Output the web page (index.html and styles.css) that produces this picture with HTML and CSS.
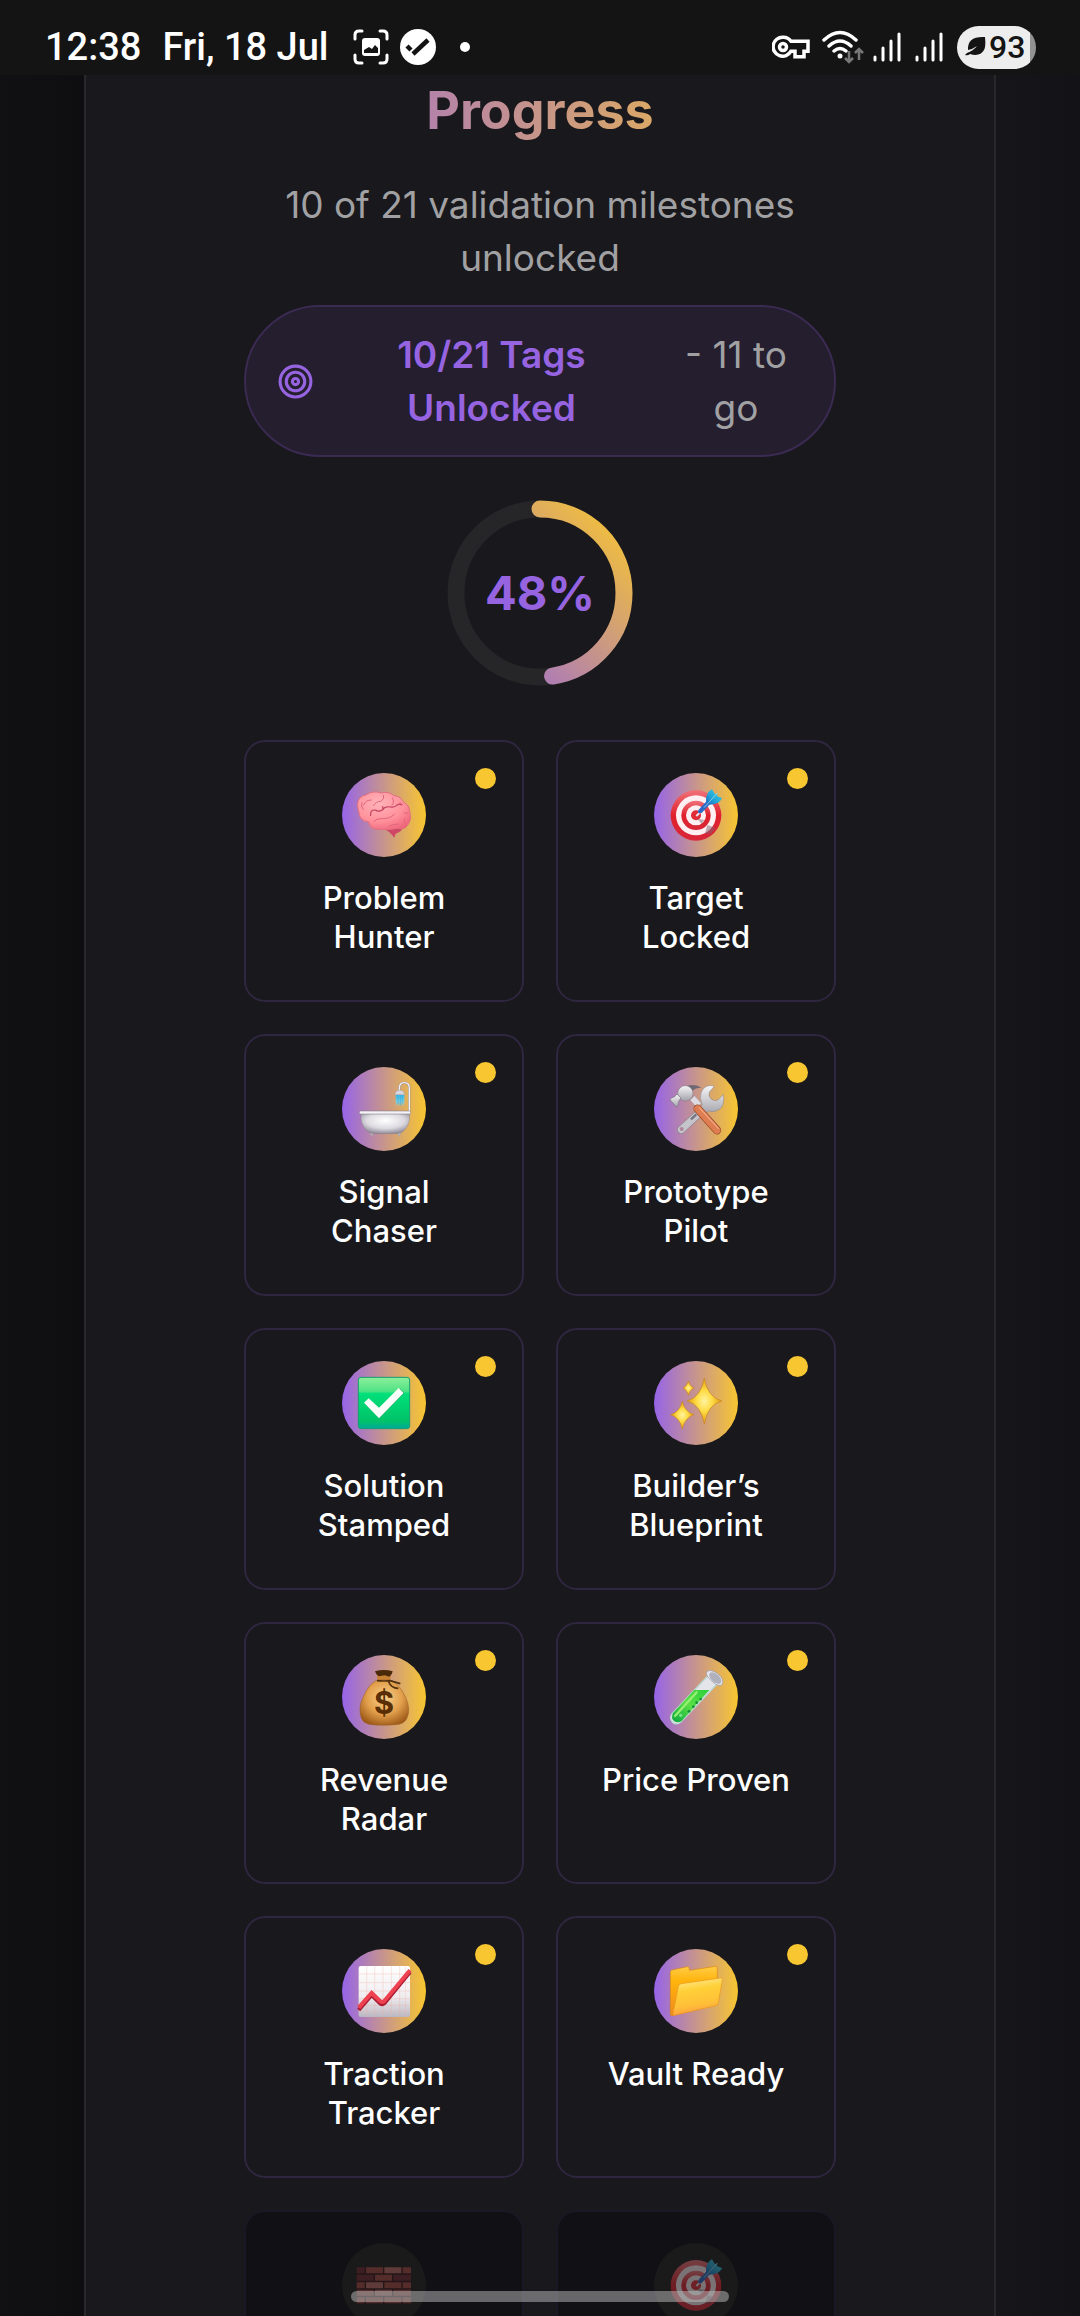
FILE: index.html
```html
<!DOCTYPE html>
<html lang="en">
<head>
<meta charset="utf-8">
<meta name="viewport" content="width=device-width, initial-scale=1">
<title>Progress</title>
<link rel="stylesheet" href="styles.css">
</head>
<body>
<svg class="defs" aria-hidden="true">
  <defs>
    <linearGradient id="brand" x1="0" y1="0" x2="1" y2="1"><stop offset="0" stop-color="#9664e0"/><stop offset="1" stop-color="#f8c630"/></linearGradient>
    <radialGradient id="pink" cx=".4" cy=".3" r=".8"><stop offset="0" stop-color="#ffb3b8"/><stop offset=".6" stop-color="#ff919c"/><stop offset="1" stop-color="#ee6379"/></radialGradient>
    <linearGradient id="red" x1="0" y1="0" x2="0" y2="1"><stop offset="0" stop-color="#f0737a"/><stop offset=".5" stop-color="#e0202c"/><stop offset="1" stop-color="#d8283a"/></linearGradient>
    <linearGradient id="dart" x1="1" y1="0" x2="0" y2="1"><stop offset="0" stop-color="#3fd8e8"/><stop offset=".6" stop-color="#22a4d6"/><stop offset="1" stop-color="#1c5fc0"/></linearGradient>
    <radialGradient id="tub" cx=".5" cy=".35" r=".65"><stop offset="0" stop-color="#fff"/><stop offset=".6" stop-color="#dcdae0"/><stop offset="1" stop-color="#928d9c"/></radialGradient>
    <linearGradient id="steel" x1="0" y1="0" x2="0" y2="1"><stop offset="0" stop-color="#f6f6f8"/><stop offset="1" stop-color="#a3a2ab"/></linearGradient>
    <linearGradient id="green" x1="0" y1="0" x2="0" y2="1"><stop offset="0" stop-color="#8cf09a"/><stop offset=".27" stop-color="#50e285"/><stop offset=".32" stop-color="#00e07a"/><stop offset=".85" stop-color="#00c268"/><stop offset="1" stop-color="#00a99b"/></linearGradient>
    <radialGradient id="spark"><stop offset="0" stop-color="#fff3a0"/><stop offset=".45" stop-color="#ffdc45"/><stop offset="1" stop-color="#e09a10"/></radialGradient>
    <radialGradient id="bag" cx=".5" cy=".4" r=".65"><stop offset="0" stop-color="#f7d08c"/><stop offset=".55" stop-color="#e3a04c"/><stop offset="1" stop-color="#9b5716"/></radialGradient>
    <linearGradient id="liquid" x1="1" y1="0" x2="0" y2="1"><stop offset="0" stop-color="#2bd03c"/><stop offset=".5" stop-color="#5adf45"/><stop offset="1" stop-color="#08a640"/></linearGradient>
    <linearGradient id="paper" x1="0" y1="0" x2="0" y2="1"><stop offset="0" stop-color="#fff"/><stop offset=".6" stop-color="#f0edf0"/><stop offset="1" stop-color="#bab7c2"/></linearGradient>
    <linearGradient id="folderBack" x1="0" y1="0" x2="0" y2="1"><stop offset="0" stop-color="#ffcc45"/><stop offset=".3" stop-color="#ffb40c"/><stop offset="1" stop-color="#f08a1c"/></linearGradient>
    <linearGradient id="folderFront" x1=".4" y1="0" x2=".6" y2="1"><stop offset="0" stop-color="#ffe98c"/><stop offset=".3" stop-color="#ffd038"/><stop offset=".7" stop-color="#ffbf38"/><stop offset="1" stop-color="#ff9340"/></linearGradient>
    <linearGradient id="water" x1="0" y1="0" x2="0" y2="1"><stop offset="0" stop-color="#37b8ea"/><stop offset=".6" stop-color="#7fd0dc"/><stop offset="1" stop-color="#7fd0dc" stop-opacity="0"/></linearGradient>
    <symbol id="target" viewBox="0 0 252 252">
      <circle cx="126" cy="127" r="76" fill="url(#red)"/>
      <circle cx="126" cy="127" r="60" fill="#fdeff2"/>
      <circle cx="126" cy="127" r="44" fill="url(#red)"/>
      <circle cx="126" cy="127" r="30" fill="#fdeff2"/>
      <circle cx="126" cy="127" r="15" fill="#e02a36"/>
      <path d="M130 138l20 2-6 14zM160 156l24 8-12 18-19 0z" fill="#7d6070" opacity=".5"/>
      <path d="M127 129l9-9" stroke="#e9e2ee" stroke-width="6"/>
      <path d="M134 110l25-27 9 10-25 27-8 1-4-5z" fill="#2b6ac8"/>
      <path d="M157 88c-3-17 3-31 17-39l9 15 7-3-1 8 15 6c-6 14-20 20-38 20z" fill="url(#dart)"/>
      <path d="M150 104l40-44" stroke="#b8eef5" stroke-width="2"/>
    </symbol>
    <symbol id="bars" viewBox="0 0 28 30"><path d="M2 25v3M10 16v12M18 9v19M26 2v26" fill="none" stroke="#fff" stroke-width="3" stroke-linecap="round"/></symbol>
  </defs>
</svg>

<header class="status">
  <time class="clock">12:38</time>
  <span class="date">Fri, 18 Jul</span>
  <svg class="shot" viewBox="0 0 36 36" aria-hidden="true"><path d="M2 10V6q0-4 4-4h3M27 2h3q4 0 4 4v4M34 26v4q0 4-4 4h-3M9 34H6q-4 0-4-4v-4" fill="none" stroke="#fff" stroke-width="3" stroke-linecap="round"/><rect x="9" y="9" width="18" height="18" rx="3" fill="#fff"/><path d="M11 24v-3l5-3 3 2 3-4 3 3v5z" fill="#141414"/></svg>
  <svg class="done" viewBox="0 0 36 36" aria-hidden="true"><circle cx="18" cy="18" r="18" fill="#fff"/><path d="M13 25L28 11M7 17l4 4" fill="none" stroke="#141414" stroke-width="4.500"/></svg>
  <span class="more"></span>
  <span class="spacer"></span>
  <svg class="key" viewBox="0 0 38 24" aria-hidden="true"><path d="M11 2.500a9.500 9.500 0 1 0 8 14h4v5.500h9v-5.500h4V6.500H19a9.500 9.500 0 0 0-8-4z" fill="none" stroke="#fff" stroke-width="3.500" transform="translate(0 -.3)"/><circle cx="11" cy="12" r="3.500" fill="none" stroke="#fff" stroke-width="3.500"/></svg>
  <svg class="wifi" viewBox="0 0 42 34" aria-hidden="true"><g fill="none" stroke="#fff" stroke-width="3.500" stroke-linecap="round"><path d="M2 10q16-15 32 0M7 16q11-10 22 0M12 21q6-5 12 0"/></g><circle cx="18" cy="26" r="2.500" fill="#fff"/><path d="M27 21v11M23 28l4 4 4-4M37 30V19M33 23l4-4 4 4" fill="none" stroke="#777" stroke-width="2.500"/></svg>
  <svg class="signal" aria-hidden="true"><use href="#bars"/></svg>
  <svg class="signal" aria-hidden="true"><use href="#bars"/></svg>
  <span class="battery"><svg viewBox="0 0 24 24" aria-hidden="true"><path d="M2 20q3 1 5-1 10 3 14-4 2-3 1-13Q4 1 5 15q5-1 9-4-4 5-10 7z" fill="#141414"/></svg>93</span>
</header>

<div class="page">
  <main class="panel">
    <div class="content">
      <h1>Progress</h1>
      <p class="summary">10 of 21 validation milestones unlocked</p>
      <div class="pill">
        <svg viewBox="0 0 24 24" aria-hidden="true"><g fill="none" stroke="#9664e0" stroke-width="2"><circle cx="12" cy="12" r="10"/><circle cx="12" cy="12" r="6"/><circle cx="12" cy="12" r="2"/></g></svg>
        <strong>10/21 Tags Unlocked</strong>
        <span>- 11 to go</span>
      </div>
      <div class="ring">
        <svg viewBox="0 0 186 186" aria-hidden="true"><g transform="rotate(-90 93 93)" fill="none" stroke-width="17"><circle cx="93" cy="93" r="84" stroke="#262628"/><circle cx="93" cy="93" r="84" stroke="url(#brand)" stroke-linecap="round" pathLength="100" stroke-dasharray="47.600 100"/></g></svg>
        <span>48%</span>
      </div>
      <ul class="tags">
        <li class="tag"><span class="badge"><svg viewBox="0 0 252 252">
          <path d="M122 164q18 9 50-6l14 1q-7 18-25 23l-5 13q-5-14-34-31z" fill="#cf4766"/>
          <path d="M50 114C42 92 48 70 71 66q24-15 46-6 23-6 39 8 21 2 28 19 19 9 19 29 7 24-6 40-10 16-29 10-23 5-50 3-34 3-39-23-27 0-29-32z" fill="url(#pink)" stroke="#e26f80" stroke-width="3"/>
          <path d="M86 127q-2-17 14-16 10 7 22-1 7-11 23-8 14 2 20-6 8-5 14 0M123 110l-1-9" fill="none" stroke="#c23f5e" stroke-width="3.500" stroke-linecap="round"/>
          <path d="M65 96q6-16 23-15M95 97q7-12 22-12 11-8 8-18M151 74q8 15-1 22M174 88l8 8M96 145q8-9 22-8 24 2 39-13M140 161q12-8 28-8M186 119q8 6 12 0M187 137q-4 9 3 15M60 89q-4 16 5 21" fill="none" stroke="#e0667c" stroke-width="3" stroke-linecap="round"/>
        </svg></span><span class="name">Problem Hunter</span></li>
        <li class="tag"><span class="badge"><svg viewBox="0 0 252 252"><use href="#target"/></svg></span><span class="name">Target Locked</span></li>
        <li class="tag"><span class="badge"><svg viewBox="0 0 252 252">
          <path d="M172 75V64q0-17 15-17t15 17v72" fill="none" stroke="#8e8997" stroke-width="6"/><path d="M172 75V64q0-17 15-17t15 17v72" fill="none" stroke="#f4f2f6" stroke-width="4"/>
          <path d="M161 83h26v36h-26z" fill="url(#water)"/><path d="M168 86v25M175 86v29M181 86v24" stroke="#2597dc" stroke-width="2" opacity=".7"/><path d="M159 83v-4q3-9 14-10 12 1 14 10v4z" fill="#d8d5dd" stroke="#8b8792" stroke-width="1"/>
          <path d="M86 198l3 10 4-9M167 198l5 10 3-10" fill="#ccc" stroke="#aaa5b0" stroke-width="3"/>
          <path d="M57 140h146q2 31-15 48-8 12-30 12h-56q-22 0-30-12-17-17-15-48z" fill="url(#tub)" stroke="#7b7680" stroke-width="1"/><rect x="52" y="132" width="154" height="9" rx="4" fill="#f5f3f7" stroke="#77727c" stroke-width="1.500"/>
        </svg></span><span class="name">Signal Chaser</span></li>
        <li class="tag"><span class="badge"><svg viewBox="0 0 252 252">
          <path d="M146 129l-64 59" stroke="#827f8a" stroke-width="24" stroke-linecap="round"/><path d="M146 129l-64 59" stroke="#c6c4cb" stroke-width="21" stroke-linecap="round"/><circle cx="83" cy="186" r="6" fill="#af859a"/><path d="M111 157l16-15" stroke="#777480" stroke-width="7"/>
          <path d="M181 57q-28-7-39 18-7 20 3 38l-11 12 17 17 12-10q18 6 34-5 16-12 11-45l-16 17q-12 5-21-3t-5-20z" fill="url(#steel)" stroke="#85828b" stroke-width="1.500"/>
          <path d="M108 99l14-13 20 23-13 13z" fill="#dddbe1" stroke="#85828b"/>
          <path d="M131 125l58 65" stroke="#91401f" stroke-width="25" stroke-linecap="round"/><path d="M131 125l58 65" stroke="#df7d52" stroke-width="21" stroke-linecap="round"/><path d="M136 122l57 62" stroke="#f0a983" stroke-width="4" stroke-linecap="round"/>
          <path d="M98 57q28-8 44 5-18 0-26 9z" fill="#6f6973"/><circle cx="94" cy="79" r="23" fill="url(#steel)" stroke="#7b7782" stroke-width="1.500"/>
          <path d="M48 98q4-8 14-9l7-8 12 12-6 8q-1 12-7 20z" fill="url(#steel)" stroke="#75717d" stroke-width="2"/>
        </svg></span><span class="name">Prototype Pilot</span></li>
        <li class="tag"><span class="badge"><svg viewBox="0 0 252 252">
          <rect x="49" y="49" width="154" height="154" rx="8" fill="url(#green)" stroke="#189d72" stroke-width="3"/><path d="M69 129l13-13 30 29 62-62 13 13-75 76z" fill="#078544" opacity=".7"/><path d="M66 125l14-13 31 28 59-59 15 15-74 76z" fill="#fafdfa"/>
        </svg></span><span class="name">Solution Stamped</span></li>
        <li class="tag"><span class="badge"><svg viewBox="0 0 252 252" fill="url(#spark)" stroke="#c9851c" stroke-width="2">
          <path d="M151 51q10 58 52 69-42 11-52 69-10-58-52-69 42-11 52-69z"/><path d="M85 121q8 33 35 40-27 8-35 43-8-35-35-43 27-7 35-40z"/><path d="M103 60q4 16 17 21-13 5-17 22-4-17-16-22 12-5 16-21z"/>
        </svg></span><span class="name">Builder’s Blueprint</span></li>
        <li class="tag"><span class="badge"><svg viewBox="0 0 252 252">
          <path d="M104 50h44l-4 30h-37z" fill="#c98134"/><path d="M99 49q27-8 53 0-1 10-10 16l-14-4-18 3q-9-6-11-15z" fill="#4b2a0a"/><path d="M102 77q26-7 47 0 24 12 42 50 17 38 3 64-8 17-35 18-40 3-69 0-25-2-32-20-11-32 6-64 17-38 38-48z" fill="url(#bag)" stroke="#9a5d20" stroke-width="1.500"/><path d="M105 77q22 2 39 0l31 9M139 78q8 22 30 22" fill="none" stroke="#51300f" stroke-width="5"/><text x="126" y="178" text-anchor="middle" class="dollar">$</text>
        </svg></span><span class="name">Revenue Radar</span></li>
        <li class="tag"><span class="badge"><svg viewBox="0 0 252 252">
          <path d="M178 72L68 188" stroke="#b7d6cf" stroke-width="41" stroke-linecap="round"/><path d="M178 72L68 188" stroke="#e4e5ea" stroke-width="33" stroke-linecap="round"/><path d="M121 105h45l-83 93q-12 8-23 0-10-9-3-24z" fill="url(#liquid)"/><path d="M128 112l-65 71" stroke="#97ef73" stroke-width="7" stroke-linecap="round"/><g fill="#168d35"><circle cx="140" cy="132" r="4"/><circle cx="128" cy="143" r="4"/><circle cx="118" cy="155" r="4"/><circle cx="105" cy="169" r="4"/></g><circle cx="80" cy="181" r="5" fill="#76e589"/><path d="M158 50q12-9 34 7 21 17 12 32-10 8-30-10-21-18-16-29z" fill="#e6e6ec" stroke="#9495a5" stroke-width="2"/><ellipse cx="184" cy="69" rx="22" ry="12" transform="rotate(42 184 69)" fill="#b0b1bd"/>
        </svg></span><span class="name">Price Proven</span></li>
        <li class="tag"><span class="badge"><svg viewBox="0 0 252 252">
          <rect x="50" y="51" width="154" height="153" rx="6" fill="url(#paper)"/><path d="M74 51v152M98 51v152M123 51v152M148 51v152M173 51v152M190 51v152M50 75h154M50 101h154M50 126h154M50 149h154M50 169h154M50 187h154" stroke="#efa99b" stroke-width="1.500" opacity=".6"/><path d="M50 183l39-45 25 25q7 5 13 0l77-94" fill="none" stroke="#a91c33" stroke-width="12"/><path d="M50 176l39-44 25 24q7 6 13 0l77-92" fill="none" stroke="#ef4250" stroke-width="12"/>
        </svg></span><span class="name">Traction Tracker</span></li>
        <li class="tag"><span class="badge"><svg viewBox="0 0 252 252">
          <path d="M49 69q0-5 5-6l46-10q5-1 5 4l2 7 77-12q6-1 6 5v109L56 200q-7 1-7-6z" fill="url(#folderBack)" stroke="#d98518" stroke-width="2"/><path d="M82 104l117-17q7-1 6 5l-12 70q-1 6-8 8L61 199q-5 1-4-5l16-82q2-7 9-8z" fill="url(#folderFront)" stroke="#ec961d" stroke-width="2"/>
        </svg></span><span class="name">Vault Ready</span></li>
        <li class="tag locked"><span class="badge"><svg viewBox="0 0 252 252">
          <path d="M44 73h163v108H44z" fill="#311014"/><path d="M44 73h24v18H44zM44 95h51v18H44zM154 95h53v18h-53z" fill="#6e262e"/><path d="M127 73h51v18h-51zM72 118h51v18H72zM99 140h51v18H99z" fill="#bd6a60"/><path d="M72 73h51v18H72zM182 73h25v18h-25zM99 95h51v18H99zM44 118h24v18H44zM127 118h51v18h-51zM182 118h25v18h-25zM44 140h51v18H44zM154 140h53v18h-53zM44 163h24v18H44zM72 163h51v18H72zM127 163h51v18h-51zM182 163h25v18h-25z" fill="#a5463f"/>
        </svg></span></li>
        <li class="tag locked"><span class="badge"><svg viewBox="0 0 252 252"><use href="#target"/></svg></span></li>
      </ul>
    </div>
  </main>
</div>
<div class="home"></div>
</body>
</html>
```
FILE: styles.css
```css
* { box-sizing: border-box; }

body {
  margin: 0;
  height: 100vh;
  display: flex;
  flex-direction: column;
  overflow: hidden;
  background: #111114;
  color: #fff;
  font-family: Inter, "Liberation Sans", sans-serif;
}

svg { display: block; flex: none; }
.defs { position: absolute; width: 0; height: 0; }

.status {
  flex: none;
  height: 75px;
  padding: 19px 44px 0 45px;
  display: flex;
  align-items: center;
  background: #141414;
  font: 500 38px/48px Roboto, sans-serif;
  white-space: nowrap;
}
.date { margin-left: 21px; }
.shot { width: 36px; height: 36px; margin-left: 24px; }
.done { width: 36px; height: 36px; margin-left: 11px; }
.more { width: 10px; height: 10px; margin-left: 24px; border-radius: 50%; background: #fff; }
.spacer { flex: 1; }
.key { width: 38px; height: 24px; margin-right: 12px; }
.wifi { width: 42px; height: 34px; margin-right: 9px; }
.signal { width: 28px; height: 30px; margin-right: 14px; }
.battery {
  width: 79px;
  height: 43px;
  padding-left: 6px;
  display: flex;
  align-items: center;
  gap: 2px;
  border-radius: 22px;
  background: linear-gradient(90deg, #ededed 73px, #929292 73px);
  color: #141414;
  font-size: 32px;
}
.battery svg { width: 24px; height: 24px; }

.page {
  flex: 1;
  min-height: 0;
  overflow: hidden;
  padding: 0 84px;
  background: linear-gradient(90deg, #111113, #0e0e11 8%, #16151a 92%, #131317);
}
.panel {
  min-height: 100%;
  padding: 4px 158px 0;
  border: solid #28282a;
  border-width: 0 2px;
  background: #19181c;
}
.content { text-align: center; }

h1 {
  margin: 0;
  font-size: 52px;
  line-height: 64px;
  font-weight: 700;
  color: transparent;
  background: linear-gradient(90deg, #9664e0, #f8c630);
  background-clip: text;
  -webkit-background-clip: text;
}
.summary {
  margin: 35px 0 21px;
  font-size: 37px;
  line-height: 53px;
  color: #a1a1a3;
}
.pill {
  display: grid;
  grid-template-columns: 37px 7fr 3fr;
  align-items: center;
  gap: 21px;
  padding: 21px 31px;
  border: 2px solid #3b2a52;
  border-radius: 76px;
  background: #241e2f;
  font-size: 37px;
  line-height: 53px;
  color: #a1a1a3;
}
.pill svg { width: 37px; height: 37px; }
.pill strong { font-weight: 600; color: #9664e0; }

.ring {
  display: grid;
  place-items: center;
  margin: 43px 0 54px;
}
.ring > * { grid-area: 1 / 1; }
.ring svg { width: 186px; height: 186px; }
.ring span { font-size: 47px; line-height: 56px; font-weight: 700; color: #9664e0; }

.tags {
  display: grid;
  grid-template-columns: 1fr 1fr;
  gap: 32px;
  margin: 0;
  padding: 0;
  list-style: none;
}
.tag {
  position: relative;
  display: flex;
  flex-direction: column;
  align-items: center;
  gap: 21px;
  min-height: 262px;
  padding: 31px 40px;
  border: 2px solid #2f2640;
  border-radius: 21px;
}
.tag::after {
  content: "";
  position: absolute;
  top: 26px;
  right: 26px;
  width: 21px;
  height: 21px;
  border-radius: 50%;
  background: #f8c630;
}
.badge {
  width: 84px;
  height: 84px;
  border-radius: 50%;
  background: linear-gradient(90deg, #9664e8, #f8c630);
}
.badge svg { width: 84px; height: 84px; }
.name { font-size: 31px; line-height: 39px; font-weight: 500; }
.dollar { font: 700 92px Inter, sans-serif; fill: #5a2f06; }

.locked { border-color: #1a1824; background: #111014; }
.locked::after { display: none; }
.locked .badge { background: #1a1a1b; }
.locked svg { opacity: .42; }

.home {
  position: fixed;
  left: 50%;
  bottom: 14px;
  width: 35%;
  height: 11px;
  transform: translateX(-50%);
  border-radius: 6px;
  background: rgba(190, 190, 190, .5);
}
```
